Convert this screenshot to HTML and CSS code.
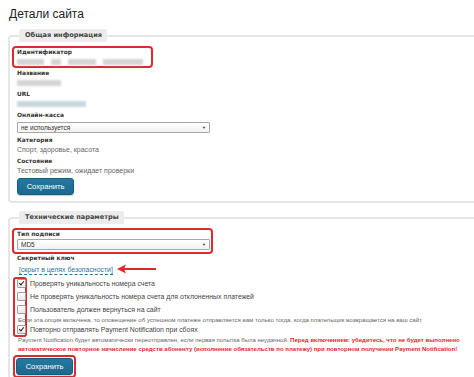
FILE: index.html
```html
<!DOCTYPE html>
<html lang="ru">
<head>
<meta charset="utf-8">
<link rel="stylesheet" href="styles.css">
</head>
<body>
<div class="page">
  <h1 class="title">Детали сайта</h1>

  <fieldset class="group group-first">
    <legend class="legend">Общая информация</legend>

    <div class="mark mark-id">
      <div class="label">Идентификатор</div>
      <div class="blur-row">
        <span class="blur" style="width:27px"></span>
        <span class="blur" style="width:10px"></span>
        <span class="blur" style="width:28px"></span>
        <span class="blur" style="width:40px"></span>
      </div>
    </div>

    <div class="field">
      <div class="label">Название</div>
      <div class="blur-row"><span class="blur" style="width:44px"></span></div>
    </div>

    <div class="field">
      <div class="label">URL</div>
      <div class="blur-row"><span class="blur blur-blue" style="width:69px"></span></div>
    </div>

    <div class="field">
      <div class="label">Онлайн-касса</div>
      <div class="select"><span>не используется</span><span class="caret">▼</span></div>
    </div>

    <div class="field">
      <div class="label">Категория</div>
      <div class="value">Спорт, здоровье, красота</div>
    </div>

    <div class="field">
      <div class="label">Состояние</div>
      <div class="value">Тестовый режим, ожидает проверки</div>
    </div>

    <button class="btn">Сохранить</button>
  </fieldset>

  <fieldset class="group group-second">
    <legend class="legend">Технические параметры</legend>

    <div class="mark mark-sign">
      <div class="label">Тип подписи</div>
      <div class="select"><span>MD5</span><span class="caret">▼</span></div>
    </div>

    <div class="label label-key">Секретный ключ</div>
    <div class="key-row">
      <a class="key-link">[скрыт в целях безопасности]</a>
      <svg class="arrow" width="40" height="10" viewBox="0 0 40 10">
        <path d="M39 5 H6" stroke="#e0262b" stroke-width="2" fill="none"/>
        <path d="M0 5 L9 0.5 L7 5 L9 9.5 Z" fill="#e0262b"/>
      </svg>
    </div>

    <div class="checks">
      <div class="check-mark"></div>
      <label class="check"><span class="box checked"></span>Проверять уникальность номера счета</label>
      <label class="check"><span class="box"></span>Не проверять уникальность номера счета для отклоненных платежей</label>
      <label class="check"><span class="box"></span>Пользователь должен вернуться на сайт</label>
      <div class="hint">Если эта опция включена, то оповещение об успешном платеже отправляется вам только тогда, когда плательщик возвращается на ваш сайт</div>
      <label class="check"><span class="box checked"></span>Повторно отправлять Payment Notification при сбоях</label>
      <div class="hint hint-two">Payment Notification будет автоматически переотправлен, если первая попытка была неудачной. <b class="warn">Перед включением: убедитесь, что не будет выполнено<br>автоматическое повторное начисление средств абоненту (исполнение обязательств по платежу) при повторном получении Payment Notification!</b></div>
    </div>

    <div class="mark mark-btn"><button class="btn">Сохранить</button></div>
  </fieldset>
</div>
</body>
</html>
```

FILE: styles.css
```css
html, body {
  margin: 0;
  padding: 0;
  background: #fff;
  overflow: hidden;
}
.page {
  width: 474px;
  height: 377px;
  overflow: hidden;
  font-family: "Liberation Sans", Arial, sans-serif;
  color: #555;
}
.title {
  margin: 0;
  padding: 5px 0 0 9px;
  font-size: 12px;
  line-height: 18px;
  font-weight: normal;
  color: #222;
}
.group {
  margin: 6px -30px 0 8px;
  padding: 4px 0 6px 7px;
  border: 2px solid #e6e6e6;
  border-radius: 4px;
  min-width: 0;
}
.group-second {
  margin-top: 8px;
  padding-bottom: 12px;
}
.legend {
  padding: 0 5px 0 6px;
  margin-left: 2px;
  height: 13px;
  line-height: 13px;
  background: #ececec;
  border-radius: 2px 2px 0 0;
  font-family: "DejaVu Sans", Verdana, sans-serif;
  font-weight: bold;
  font-size: 6.6px;
  color: #444;
}
.label {
  font-family: "DejaVu Sans", Verdana, sans-serif;
  font-weight: bold;
  font-size: 5.9px;
  line-height: 9px;
  color: #333;
}
.value {
  font-size: 7px;
  line-height: 9px;
  color: #666;
}
.field {
  margin-top: 3px;
}
.mark {
  border: 2px solid #dd2a2f;
  border-radius: 4px;
  margin-left: -5px;
  padding: 0 0 0 3px;
}
.mark-id {
  width: 134px;
  margin-bottom: -2px;
}
.mark-sign {
  width: 194px;
  padding-bottom: 2px;
}
.blur-row {
  height: 9px;
  display: flex;
  align-items: center;
  gap: 7px;
}
.blur {
  display: block;
  height: 6px;
  background: #d4d4d4;
  filter: blur(1.3px);
}
.blur-blue {
  background: #c9d7e0;
}
.select {
  margin-top: 2px;
  width: 185px;
  height: 9px;
  border: 1px solid #a8a8a8;
  border-radius: 1px;
  background: linear-gradient(#fff, #f2f2f2);
  display: flex;
  justify-content: space-between;
  align-items: center;
  padding: 0 3px 0 3px;
  box-sizing: content-box;
  font-size: 6.5px;
  color: #333;
}
.mark .select {
  margin-top: 0;
}
.field .select {
  margin-bottom: 1px;
}
.caret {
  font-size: 4px;
  color: #333;
}
.btn {
  display: block;
  margin-top: 3px;
  width: 57px;
  height: 17px;
  padding: 0;
  border: 1px solid #155d7c;
  border-radius: 3px;
  background: linear-gradient(#2479a0, #1a6a8e);
  color: #fff;
  font-family: "Liberation Sans", Arial, sans-serif;
  font-size: 7.6px;
  box-shadow: 0 1px 1px rgba(0,0,0,0.2);
}
.label-key {
  margin-top: 0;
}
.key-row {
  display: flex;
  align-items: center;
  height: 10px;
  margin-top: 2px;
  padding-left: 2px;
}
.key-link {
  font-size: 6.9px;
  line-height: 9px;
  color: #2f6f98;
  border-bottom: 1px dashed #2f6f98;
}
.arrow {
  display: block;
  margin-left: 4px;
  margin-top: -3px;
}
.checks {
  position: relative;
  margin-top: 2px;
}
.check-mark {
  position: absolute;
  left: -4px;
  top: 0;
  width: 10px;
  height: 56px;
  border: 2px solid #dd2a2f;
  border-radius: 3px;
}
.check {
  display: flex;
  align-items: center;
  height: 13px;
  font-size: 6.9px;
  color: #444;
}
.box {
  width: 7px;
  height: 7px;
  border: 1px solid #a0a0a0;
  border-radius: 1px;
  background: linear-gradient(#fff, #e8e8e8);
  margin-right: 4px;
  position: relative;
  flex: none;
}
.box.checked::after {
  content: "";
  position: absolute;
  left: 2px;
  top: 0px;
  width: 2px;
  height: 4px;
  border: solid #222;
  border-width: 0 1.5px 1.5px 0;
  transform: rotate(40deg);
}
.hint {
  font-size: 6.1px;
  line-height: 7px;
  color: #666;
  padding-left: 1px;
  white-space: nowrap;
}
.hint-two {
  font-size: 6px;
  line-height: 9px;
}
.warn {
  color: #e8262b;
  font-size: 6.05px;
}
.mark-btn {
  display: inline-block;
  padding: 1px;
  margin-top: 1px;
  margin-left: -4px;
}
.mark-btn .btn {
  margin-top: 0;
}
```
